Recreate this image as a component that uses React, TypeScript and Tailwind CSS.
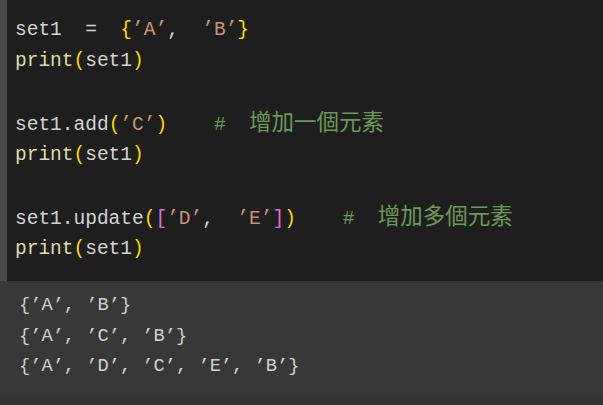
const mono = "font-['Liberation_Mono','Noto_Sans_CJK_TC',monospace]";

function Cjk({ children }: { children: string }) {
  return <span className="font-['Noto_Sans_CJK_TC',sans-serif] text-[22.5px] leading-none">{children}</span>;
}

const P = ({ c }: { c: string }) => <span className="text-[#ffd700]">{c}</span>;
const S = ({ c }: { c: string }) => <span className="text-[#ce9178]">{c}</span>;
const Fn = ({ c }: { c: string }) => <span className="text-[#dcdcaa]">{c}</span>;
const Br = ({ c }: { c: string }) => <span className="text-[#da70d6]">{c}</span>;

function Line({ children }: { children?: React.ReactNode }) {
  return <div className="h-[31.25px] leading-[31.25px] whitespace-pre">{children}</div>;
}

export default function App() {
  return (
    <div className="w-[603px] h-[405px] bg-[#333333] overflow-hidden">
      {/* code cell */}
      <div className="flex h-[281px] bg-[#1e1e1e]">
        <div className="w-[7px] bg-[#4b4b4b]" />
        <div className={`${mono} text-[19.5px] text-[#d4d4d4] pl-[8px] pt-[15px]`}>
          <Line>
            set1  =  <P c="{" />
            <S c="’A’" />,  <S c="’B’" />
            <P c="}" />
          </Line>
          <Line>
            <Fn c="print" />
            <P c="(" />set1<P c=")" />
          </Line>
          <Line />
          <Line>
            set1.add<P c="(" />
            <S c="’C’" />
            <P c=")" />
            <span className="text-[#6a9955]">
              {"    #  "}
              <Cjk>增加一個元素</Cjk>
            </span>
          </Line>
          <Line>
            <Fn c="print" />
            <P c="(" />set1<P c=")" />
          </Line>
          <Line />
          <Line>
            set1.update<P c="(" />
            <Br c="[" />
            <S c="’D’" />,  <S c="’E’" />
            <Br c="]" />
            <P c=")" />
            <span className="text-[#6a9955]">
              {"    #  "}
              <Cjk>增加多個元素</Cjk>
            </span>
          </Line>
          <Line>
            <Fn c="print" />
            <P c="(" />set1<P c=")" />
          </Line>
        </div>
      </div>

      {/* output */}
      <div className={`${mono} h-[114px] bg-[#383838] pl-[19px] pt-[9px] text-[18.7px] text-[#d0d0d0]`}>
        <div className="h-[30.5px] leading-[30.5px] whitespace-pre">{"{’A’, ’B’}"}</div>
        <div className="h-[30.5px] leading-[30.5px] whitespace-pre">{"{’A’, ’C’, ’B’}"}</div>
        <div className="h-[30.5px] leading-[30.5px] whitespace-pre">{"{’A’, ’D’, ’C’, ’E’, ’B’}"}</div>
      </div>
    </div>
  );
}
